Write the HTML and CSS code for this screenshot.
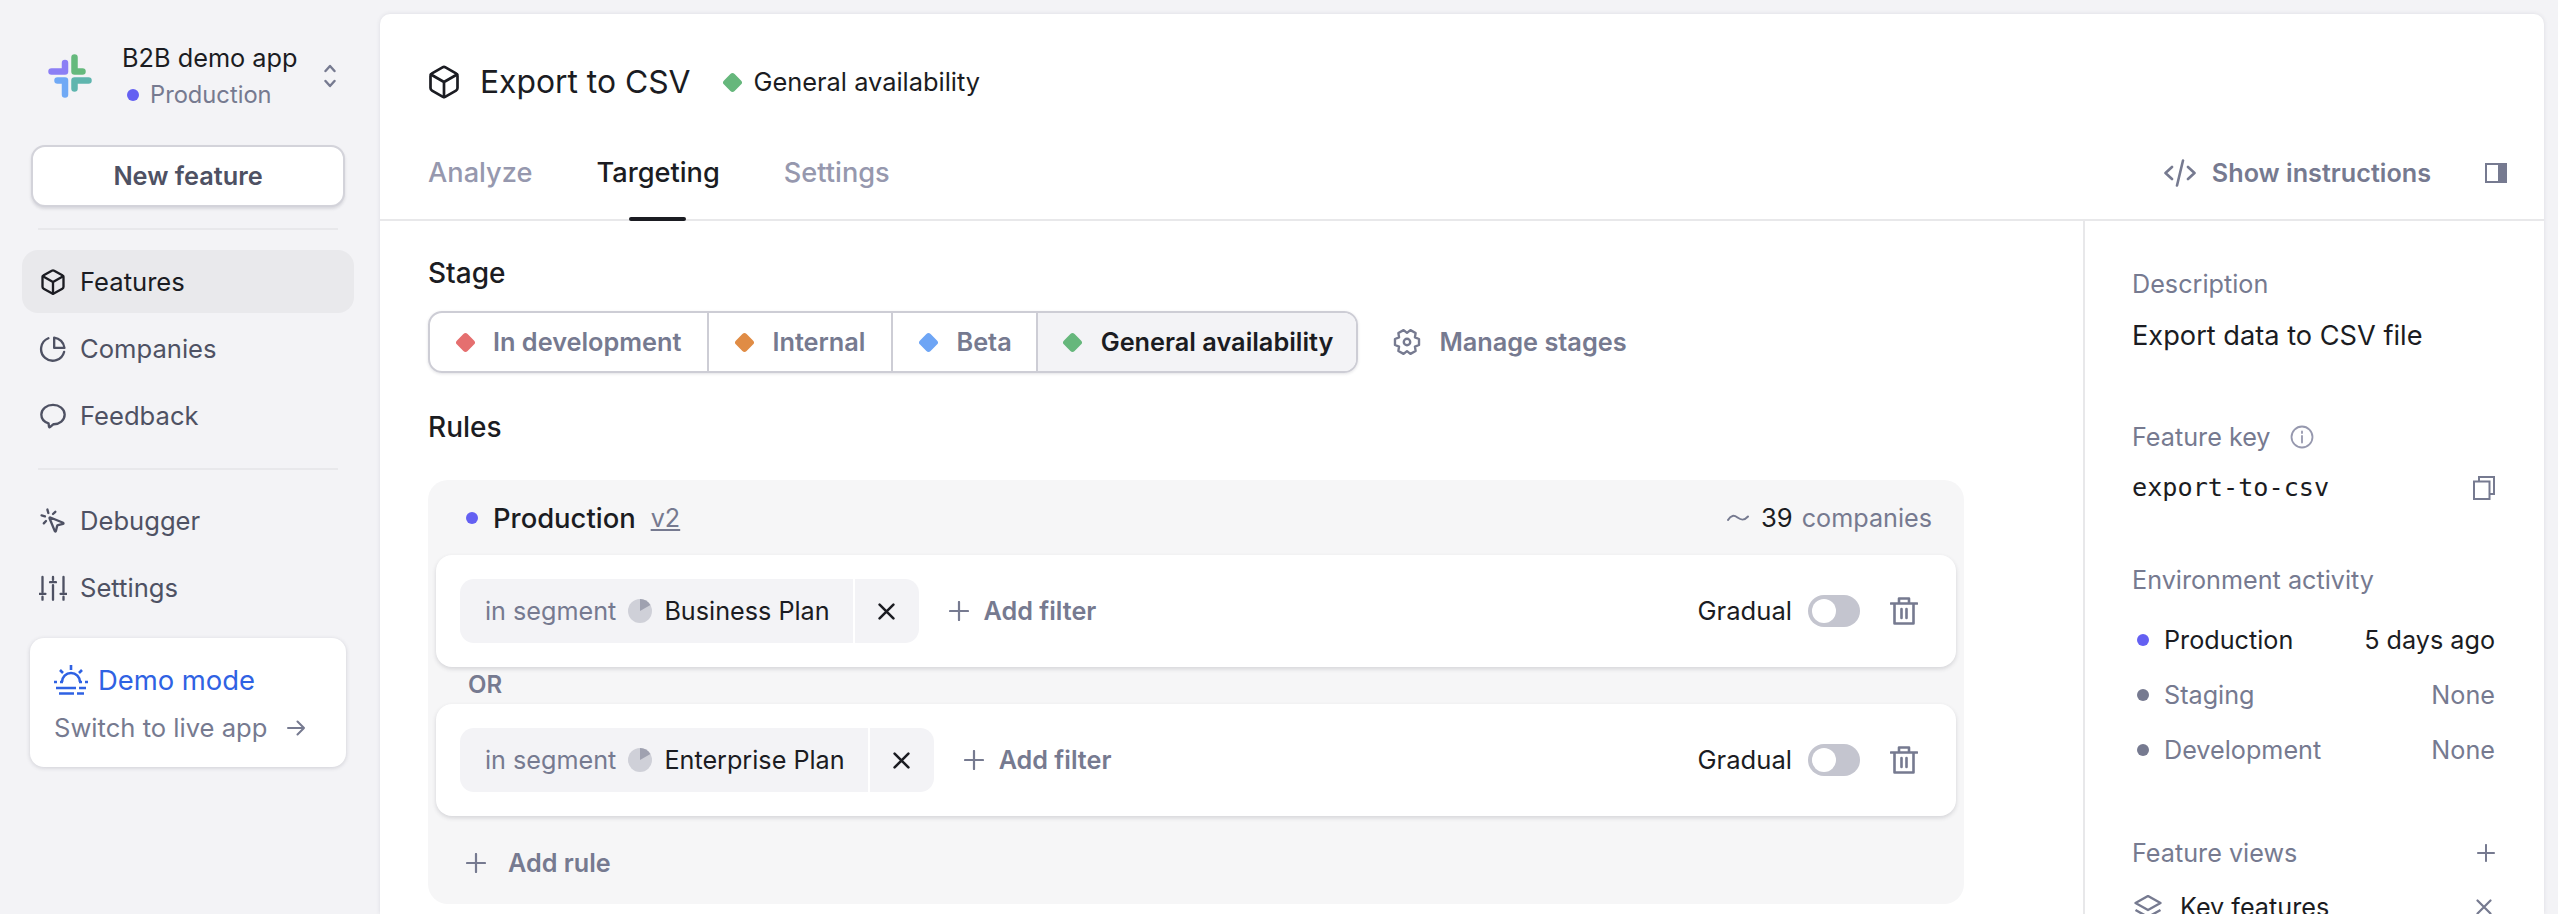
FILE: index.html
```html
<!DOCTYPE html>
<html lang="en">
<head>
<meta charset="utf-8">
<title>Export to CSV</title>
<link rel="stylesheet" href="styles.css">
</head>
<body>
<div class="app">
  <aside class="sidebar">
    <div class="brand">
      <svg class="logo" viewBox="0 0 44 44" fill="none" stroke-width="6.5" stroke-linecap="round" stroke-linejoin="round">
        <path stroke="#8C7FF5" d="M3.5 17.5H17V9"/>
        <path stroke="#65B97D" d="M26.5 3.5V17.5H34.5"/>
        <path stroke="#5FB5AE" d="M40.5 26.5H26.5V34.5"/>
        <path stroke="#70A9F5" d="M9.5 26.5H17V40.5"/>
      </svg>
      <div class="brand-text">
        <div class="brand-name">B2B demo app</div>
        <div class="brand-env"><span class="dot dot-indigo"></span>Production</div>
      </div>
      <svg class="chevrons" viewBox="0 0 12 24" fill="none" stroke="#767A90" stroke-width="2.4" stroke-linecap="round" stroke-linejoin="round">
        <path d="M1.5 7 6 2 10.500 7M1.500 17 6 22 10.500 17"/>
      </svg>
    </div>
    <button class="new-btn">New feature</button>
    <div class="side-rule first"></div>
    <nav class="nav">
      <a class="nav-item active">
        <svg class="nav-icon" viewBox="0 0 24 24"><path d="M21 8a2 2 0 0 0-1-1.73l-7-4a2 2 0 0 0-2 0l-7 4A2 2 0 0 0 3 8v8a2 2 0 0 0 1 1.73l7 4a2 2 0 0 0 2 0l7-4A2 2 0 0 0 21 16Z"/><path d="m3.3 7 8.7 5 8.7-5M12 22V12"/></svg>
        Features
      </a>
      <a class="nav-item">
        <svg class="nav-icon" viewBox="0 0 24 24"><path d="M21.5 14.5A10 10 0 1 1 8 2.8"/><path d="M13 2.2A10 10 0 0 1 21.8 11H13z"/></svg>
        Companies
      </a>
      <a class="nav-item">
        <svg class="nav-icon" viewBox="0 0 24 24"><path d="M12 2.5c5.3 0 10 3.3 10 8.3s-4.5 8.3-9.3 8.3h-.5L9.4 21.6a.5.5 0 0 1-.8-.3l-.4-2.9C4.600 17.300 2 14.500 2 10.800 2 5.800 6.700 2.500 12 2.500z"/></svg>
        Feedback
      </a>
    </nav>
    <div class="side-rule second"></div>
    <nav class="nav">
      <a class="nav-item">
        <svg class="nav-icon" viewBox="0 0 24 24"><path d="M14 4.100 12 6M5.100 8l-2.900-.8M6 12l-1.900 2M7.200 2.200 8 5.100"/><path d="M9.037 9.690a.498.498 0 0 1 .653-.653l11 4.500a.5.5 0 0 1-.074.949l-4.349 1.041a1 1 0 0 0-.74.739l-1.040 4.350a.5.5 0 0 1-.95.074z"/></svg>
        Debugger
      </a>
      <a class="nav-item">
        <svg class="nav-icon" viewBox="0 0 24 24"><path d="M3 2.500v13M.5 17h5M3 19.500v2.500M12 2.500v2.500M9.500 7h5M12 9.500v12.500M21 2.500v13M18.500 17h5M21 19.500v2.500"/></svg>
        Settings
      </a>
    </nav>
    <div class="demo-card">
      <div class="demo-title">
        <svg class="demo-icon" viewBox="0 0 34 30" fill="none" stroke="#2F62E3" stroke-width="2.600">
          <path d="M17 0v5M6 5l3 3M28 5l-3 3M0 17h3M31 17h3M8 17a9 9 0 0 1 18 0M6 17h3M25 17h3"/>
          <path d="M2 23h20M25 23h7M5 28.500h15M23 28.500h7"/>
        </svg>
        Demo mode
      </div>
      <div class="demo-link">Switch to live app
        <svg class="demo-arrow" viewBox="0 0 18 16" fill="none" stroke="#767A90" stroke-width="2" stroke-linecap="round" stroke-linejoin="round"><path d="M1 8h16M10.500 1.500 17 8l-6.500 6.500"/></svg>
      </div>
    </div>
  </aside>

  <main class="panel">
    <header class="panel-head">
      <div class="title-row">
        <svg class="title-icon" viewBox="0 0 24 24"><path d="M21 8a2 2 0 0 0-1-1.730l-7-4a2 2 0 0 0-2 0l-7 4A2 2 0 0 0 3 8v8a2 2 0 0 0 1 1.730l7 4a2 2 0 0 0 2 0l7-4A2 2 0 0 0 21 16Z"/><path d="m3.300 7 8.700 5 8.700-5M12 22V12"/></svg>
        <h1 class="title">Export to CSV</h1>
        <span class="stage-badge"><i class="diamond d-green"></i>General availability</span>
      </div>
      <div class="tab-row">
        <div class="tabs">
          <a class="tab">Analyze</a>
          <a class="tab current">Targeting</a>
          <a class="tab">Settings</a>
        </div>
        <div class="head-actions">
          <a class="instructions">
            <svg class="code-icon" viewBox="0 0 32 28" fill="none" stroke="#767A90" stroke-width="2.600" stroke-linecap="round" stroke-linejoin="round"><path d="M8 8 1.500 14 8 20M24 8l6.500 6L24 20M19 1.500 13 26.500"/></svg>
            Show instructions
          </a>
          <svg class="panel-toggle" viewBox="0 0 22 20"><rect x="1" y="1" width="20" height="18" fill="none" stroke="#767A90" stroke-width="2"/><rect x="13" y="1" width="8" height="18" fill="#767A90"/></svg>
        </div>
      </div>
    </header>

    <div class="body-row">
      <section class="content">
        <div class="label stage-label">Stage</div>
        <div class="stage-row">
          <div class="segments">
            <span class="seg"><i class="diamond d-red"></i>In development</span>
            <span class="seg"><i class="diamond d-orange"></i>Internal</span>
            <span class="seg"><i class="diamond d-blue"></i>Beta</span>
            <span class="seg selected"><i class="diamond d-green"></i>General availability</span>
          </div>
          <a class="manage">
            <svg class="gear" viewBox="-1 -1 26 26"><path d="M23.160 9.220V14.780L19.360 16.250 20 20.270 15.170 23.050 12 20.500 8.830 23.050 4 20.270 4.640 16.250.84 14.780V9.220L4.640 7.750 4 3.730 8.830.95 12 3.500 15.170.95 20 3.730 19.360 7.750Z"/><circle cx="12" cy="12" r="3"/></svg>
            Manage stages
          </a>
        </div>
        <div class="label rules-label">Rules</div>
        <div class="rules">
          <div class="rules-head">
            <div class="env"><span class="dot dot-indigo"></span><span class="env-name">Production</span><a class="version">v2</a></div>
            <div class="count">
              <svg class="wave" viewBox="0 0 22 10" fill="none" stroke="#767A90" stroke-width="2" stroke-linecap="round"><path d="M1 7c3-5 6-5 9.500-2.500S17 8 21 3.500"/></svg>
              <span class="count-num">39</span> companies
            </div>
          </div>
          <div class="rule-card">
            <div class="pill">
              <div class="pill-main">
                <span class="muted">in segment</span>
                <svg class="pie" viewBox="0 0 24 24"><circle cx="12" cy="12" r="12" fill="#CFD0D8"/><path d="M12 12V0A12 12 0 0 1 22.400 6z" fill="#9FA1B0"/></svg>
                <span class="seg-name">Business Plan</span>
              </div>
              <div class="pill-x"><svg class="x-icon" viewBox="0 0 16 16"><path d="M1.500 1.500 14.500 14.500M14.500 1.500 1.500 14.500"/></svg></div>
            </div>
            <a class="add"><svg class="plus" viewBox="0 0 20 20"><path d="M10 1v18M1 10h18"/></svg>Add filter</a>
            <div class="rule-end">
              <span class="gradual">Gradual</span>
              <span class="toggle"><span class="knob"></span></span>
              <svg class="trash" viewBox="0 0 28 28"><path d="M1 6.500h26M4.500 6.500V26.500h19V6.500M9 6.500V1.500h10v5M11.500 12v9M16.500 12v9"/></svg>
            </div>
          </div>
          <div class="or">OR</div>
          <div class="rule-card">
            <div class="pill">
              <div class="pill-main">
                <span class="muted">in segment</span>
                <svg class="pie" viewBox="0 0 24 24"><circle cx="12" cy="12" r="12" fill="#CFD0D8"/><path d="M12 12V0A12 12 0 0 1 22.400 6z" fill="#9FA1B0"/></svg>
                <span class="seg-name">Enterprise Plan</span>
              </div>
              <div class="pill-x"><svg class="x-icon" viewBox="0 0 16 16"><path d="M1.500 1.500 14.500 14.500M14.500 1.500 1.500 14.500"/></svg></div>
            </div>
            <a class="add"><svg class="plus" viewBox="0 0 20 20"><path d="M10 1v18M1 10h18"/></svg>Add filter</a>
            <div class="rule-end">
              <span class="gradual">Gradual</span>
              <span class="toggle"><span class="knob"></span></span>
              <svg class="trash" viewBox="0 0 28 28"><path d="M1 6.500h26M4.500 6.500V26.500h19V6.500M9 6.500V1.500h10v5M11.500 12v9M16.500 12v9"/></svg>
            </div>
          </div>
          <a class="add add-rule"><svg class="plus" viewBox="0 0 20 20"><path d="M10 1v18M1 10h18"/></svg>Add rule</a>
        </div>
      </section>

      <aside class="details">
        <div class="d-label">Description</div>
        <div class="d-value">Export data to CSV file</div>
        <div class="d-label key-label">Feature key
          <svg class="info" viewBox="0 0 24 24"><circle cx="12" cy="12" r="10.500"/><path d="M12 11v6.500M12 6.500v1.500"/></svg>
        </div>
        <div class="key-row">
          <code class="key">export-to-csv</code>
          <svg class="copy" viewBox="0 0 22 24"><path d="M6 5.500V1h15v17h-4.500"/><rect x="1" y="5.500" width="15.500" height="17.500"/></svg>
        </div>
        <div class="d-label env-label">Environment activity</div>
        <div class="activity">
          <div class="act-row live"><span class="dot dot-indigo"></span><span class="act-name">Production</span><span>5 days ago</span></div>
          <div class="act-row"><span class="dot dot-gray"></span><span class="act-name">Staging</span><span>None</span></div>
          <div class="act-row"><span class="dot dot-gray"></span><span class="act-name">Development</span><span>None</span></div>
        </div>
        <div class="d-label views-label">Feature views
          <svg class="view-plus" viewBox="0 0 20 20"><path d="M10 1v18M1 10h18"/></svg>
        </div>
        <div class="view-row">
          <svg class="layers" viewBox="0 0 28 24"><path d="M14 1 26.500 8 14 15 1.500 8z"/><path d="M1.500 15 14 22 26.500 15"/></svg>
          <span class="view-name">Key features</span>
          <svg class="view-x" viewBox="0 0 16 16"><path d="M1.500 1.500 14.500 14.500M14.500 1.500 1.500 14.500"/></svg>
        </div>
      </aside>
    </div>
  </main>
</div>
</body>
</html>
```

FILE: styles.css
```css
* { box-sizing: border-box; }
html, body { margin: 0; height: 100%; overflow: hidden; }
body {
  background: #F3F3F6;
  color: #1B1C22;
  font-family: Inter, "Liberation Sans", sans-serif;
  font-size: 25.2px;
  line-height: 36px;
}
a { color: inherit; text-decoration: none; }
h1 { margin: 0; font: inherit; }
svg { flex: none; display: block; }

.app { display: grid; grid-template-columns: 380px 1fr; height: 914px; padding: 14px 14px 0 0; }

/* Sidebar */
.sidebar { padding: 0 26px 0 22px; margin-top: -14px; }
.brand { display: flex; align-items: center; height: 122px; padding: 30px 0 0 26px; }
.logo { width: 44px; height: 44px; }
.brand-text { margin-left: 30px; width: 202px; }
.brand-name { font-size: 25.3px; line-height: 38px; }
.brand-env { display: flex; align-items: center; color: #767A90; font-size: 23.7px; line-height: 36px; padding-left: 5px; }
.brand-env .dot { margin-right: 11px; }
.chevrons { width: 12px; height: 24px; }
.dot { width: 12px; height: 12px; border-radius: 50%; flex: none; }
.dot-indigo { background: #6460F2; }
.dot-gray { background: #767A90; }
.new-btn {
  display: block; width: 314px; height: 62px; margin: 23px 0 0 9px;
  background: #fff; border: 2px solid #D3D3DA; border-radius: 14px;
  box-shadow: 0 2px 3px rgba(60,60,80,.15);
  color: #4E5163; font: 600 25.3px/36px Inter, sans-serif;
}
.side-rule { height: 2px; background: #E8E8EB; margin: 0 16px; }
.side-rule.first { margin-top: 21px; margin-bottom: 20px; }
.side-rule.second { margin-top: 21px; margin-bottom: 19px; }
.nav { display: flex; flex-direction: column; gap: 4px; }
.nav-item { display: flex; align-items: center; height: 63px; padding-left: 17px; border-radius: 16px; color: #4E5163; font-size: 25.6px; }
.nav-item.active { background: #E9E9EC; color: #1B1C22; }
.nav-icon { width: 28px; height: 28px; margin-right: 13px; fill: none; stroke: currentColor; stroke-width: 2; stroke-linecap: round; stroke-linejoin: round; }
.demo-card {
  width: 316px; height: 129px; margin: 19px 0 0 8px; padding: 23px 24px;
  background: #fff; border-radius: 14px;
  box-shadow: 0 1px 4px rgba(60,60,80,.2);
}
.demo-title { display: flex; align-items: center; color: #2F62E3; font-size: 27.4px; line-height: 38px; }
.demo-icon { width: 34px; height: 30px; margin-right: 10px; }
.demo-link { display: flex; align-items: center; color: #767A90; font-size: 25.6px; line-height: 36px; margin-top: 11px; }
.demo-arrow { width: 18px; height: 16px; margin-left: 20px; }

/* Panel */
.panel { background: #fff; border-radius: 10px 10px 0 0; box-shadow: 0 0 4px rgba(60,60,80,.12); overflow: hidden; }
.panel-head { border-bottom: 2px solid #E8E8EA; height: 207px; padding-top: 40px; }
.title-row { display: flex; align-items: center; height: 56px; padding-left: 48px; }
.title-icon { width: 36px; height: 36px; margin-left: -2px; margin-right: 18px; fill: none; stroke: currentColor; stroke-width: 1.800; stroke-linecap: round; stroke-linejoin: round; }
.title { font-size: 31.8px; }
.stage-badge { display: flex; align-items: center; margin-left: 35px; font-size: 25.4px; }
.diamond { display: block; width: 15px; height: 15px; border-radius: 3px; transform: rotate(45deg); flex: none; }
.stage-badge .diamond { margin-right: 13px; }
.d-red { background: #E56F6F; }
.d-orange { background: #E08C45; }
.d-blue { background: #6EA5F5; }
.d-green { background: #66B77C; }
.tab-row { display: flex; justify-content: space-between; height: 92px; margin-top: 17px; padding: 0 37px 0 48px; }
.tabs { display: flex; gap: 64px; }
.tab { position: relative; display: flex; align-items: center; color: #9698AE; font-size: 27.2px; font-weight: 450; }
.tab.current { color: #1B1C22; }
.tab.current::after { content: ""; position: absolute; left: 33px; right: 34px; bottom: -2px; height: 4px; border-radius: 2px; background: #1B1C22; }
.head-actions { display: flex; align-items: center; }
.instructions { display: flex; align-items: center; color: #767A90; font-weight: 600; margin-right: 54px; }
.code-icon { width: 32px; height: 28px; margin-right: 16px; }
.panel-toggle { width: 22px; height: 20px; }

.body-row { display: flex; }
.content { flex: 1; padding: 34px 119px 0 48px; }
.label { font-size: 28px; font-weight: 450; }
.rules-label { margin-top: 36px; }
.stage-row { display: flex; align-items: center; margin-top: 20px; }
.segments { display: flex; height: 62px; border: 2px solid #CDCDD5; border-radius: 14px; box-shadow: 0 1px 3px rgba(60,60,80,.15); overflow: hidden; }
.seg { display: flex; align-items: center; padding: 0 26px 0 27.5px; color: #767A90; font-weight: 600; border-left: 2px solid #CDCDD5; font-size: 25.3px; }
.seg:first-child { border-left: 0; }
.seg:nth-child(3) { padding-right: 24px; }
.seg .diamond { margin-right: 20.5px; }
.seg.selected { background: #F3F3F6; color: #1B1C22; padding-right: 23px; }
.manage { display: flex; align-items: center; margin-left: 35px; color: #767A90; font-weight: 600; font-size: 25.3px; }
.gear { width: 28px; height: 28px; margin-right: 18px; fill: none; stroke: #767A90; stroke-width: 2.200; stroke-linejoin: round; }

.rules { margin-top: 35px; background: #F6F6F7; border-radius: 20px; padding: 0 8px; height: 424px; }
.rules-head { display: flex; justify-content: space-between; align-items: center; height: 75px; padding: 0 24px 0 30px; }
.env { display: flex; align-items: center; }
.env .dot { margin-right: 15px; }
.env-name { font-size: 27.4px; font-weight: 450; }
.version { margin-left: 15px; color: #767A90; text-decoration: underline; }
.count { display: flex; align-items: center; color: #767A90; }
.wave { width: 22px; height: 10px; margin-right: 12px; }
.count-num { color: #1B1C22; margin-right: 9px; font-size: 25.6px; }
.rule-card { display: flex; align-items: center; height: 112px; padding: 0 38px 0 24px; background: #fff; border-radius: 16px; box-shadow: 0 2px 4px rgba(60,60,80,.18); }
.pill { display: flex; height: 64px; }
.pill-main { display: flex; align-items: center; background: #F3F3F6; border-radius: 14px 0 0 14px; padding: 0 23px 0 25px; }
.muted { color: #767A90; }
.pie { width: 24px; height: 24px; margin: 0 12px 0 12px; }
.seg-name { color: #1B1C22; }
.pill-x { display: flex; align-items: center; justify-content: center; width: 64px; margin-left: 2px; background: #F3F3F6; border-radius: 0 14px 14px 0; }
.x-icon { width: 17px; height: 17px; fill: none; stroke: #1B1C22; stroke-width: 2.400; stroke-linecap: round; }
.add { display: flex; align-items: center; color: #767A90; font-weight: 600; }
.rule-card .add { margin-left: 30px; }
.plus { width: 20px; height: 20px; margin-right: 15px; fill: none; stroke: #767A90; stroke-width: 2.200; stroke-linecap: round; }
.rule-end { display: flex; align-items: center; margin-left: auto; }
.gradual { font-size: 25.6px; }
.toggle { display: block; width: 52px; height: 32px; margin-left: 16px; padding: 4px; background: #C4C5CF; border-radius: 16px; }
.knob { display: block; width: 24px; height: 24px; background: #fff; border-radius: 50%; }
.trash { width: 28px; height: 28px; margin-left: 30px; fill: none; stroke: #767A90; stroke-width: 2.600; stroke-linejoin: round; stroke-linecap: round; }
.or { height: 37px; padding-left: 32px; color: #767A90; font-weight: 600; font-size: 24px; line-height: 36px; }
.add-rule { height: 88px; padding: 6px 0 0 30px; }
.add-rule .plus { margin-right: 22px; }

.details { width: 461px; flex: none; border-left: 2px solid #E8E8EA; padding: 45px 49px 0 47px; height: 700px; }
.d-label { display: flex; align-items: center; color: #767A90; }
.d-value { margin-top: 16px; font-size: 27.2px; }
.key-label { margin-top: 65px; }
.info { width: 24px; height: 24px; margin-left: 19px; fill: none; stroke: #9698AE; stroke-width: 1.800; stroke-linecap: round; }
.key-row { display: flex; justify-content: space-between; align-items: center; margin-top: 15px; }
.key { font-family: "DejaVu Sans Mono", monospace; font-size: 25.2px; }
.copy { width: 22px; height: 24px; fill: none; stroke: #767A90; stroke-width: 2; }
.env-label { margin-top: 56px; }
.activity { margin-top: 24px; display: flex; flex-direction: column; gap: 19px; }
.act-row { display: flex; align-items: center; color: #767A90; padding-left: 5px; }
.act-row.live { color: #1B1C22; }
.act-row .dot { margin-right: 15px; }
.act-name { flex: 1; }
.views-label { margin-top: 67px; justify-content: space-between; }
.view-plus { width: 18px; height: 18px; fill: none; stroke: #767A90; stroke-width: 2.200; stroke-linecap: round; }
.view-row { display: flex; align-items: center; margin-top: 18px; padding-left: 2px; }
.layers { width: 28px; height: 24px; fill: none; stroke: #767A90; stroke-width: 2.400; stroke-linejoin: round; }
.view-name { flex: 1; margin-left: 18px; }
.view-x { width: 16px; height: 16px; margin-right: 3px; fill: none; stroke: #767A90; stroke-width: 2.200; stroke-linecap: round; }
```
